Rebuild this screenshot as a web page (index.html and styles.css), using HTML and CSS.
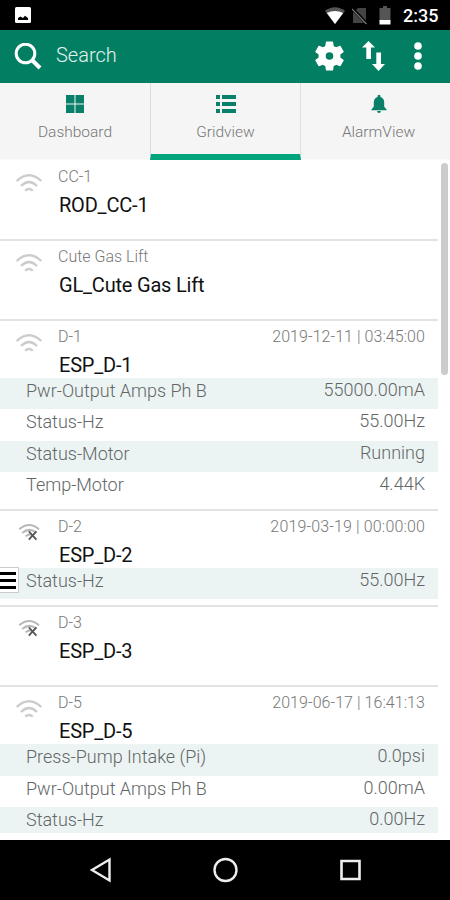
FILE: index.html
```html
<!DOCTYPE html>
<html lang="en">
<head>
<meta charset="utf-8">
<meta name="viewport" content="width=device-width, initial-scale=1">
<title>Gridview</title>
<link rel="stylesheet" href="styles.css">
</head>
<body>
<svg class="symbols" aria-hidden="true">
  <symbol id="wifi" viewBox="0 0 28 22">
    <g fill="none" stroke="#ccc" stroke-width="2.4">
      <path d="M1.700 9Q14-2.600 26.300 9"/><path d="M6 14Q14 6 22 14"/><path d="M10.200 18.600Q14 15.200 17.800 18.600"/>
    </g>
  </symbol>
  <symbol id="wifi-off" viewBox="0 0 28 22">
    <g fill="none" stroke="#b8b8b8" stroke-width="2">
      <path d="M4.300 7.200Q14-1.200 24 7.200"/><path d="M7.200 11Q14 5 21 10.500"/><path d="M10.500 14.400Q13 12 16 12.500"/>
    </g>
    <path d="M13.800 9.400l7.600 8.200M21.400 9.400l-7.600 8.200" stroke="#555" stroke-width="1.8"/>
  </symbol>
</svg>
<div class="screen">
  <header class="status">
    <svg class="picture" width="16" height="16" viewBox="0 0 16 16"><rect width="16" height="16" rx="1.500" fill="#fff"/><path d="M3 13V11l2.500-1.500L8 11l2-2.300 3 2.300v2z"/></svg>
    <div class="status-right">
      <svg width="20" height="17" viewBox="0 0 20 17"><path d="M0 4Q10-3.500 20 4L10 17z" fill="#555"/><path d="M1.800 6Q10 2 18.200 6L10 17z" fill="#fff"/></svg>
      <svg class="sim" width="16" height="18" viewBox="0 0 16 18"><path d="M1 6l5-5h8v15H1z" fill="#444"/><path d="M0 1l15 16" stroke="#000" stroke-width="3"/><path d="M0 2l14.500 15" stroke="#777" stroke-width="1.200"/></svg>
      <svg class="battery" width="12" height="19" viewBox="0 0 12 19"><path d="M.5 2H4V0h4v2h3.500v13H.5z" fill="#555"/><path d="M.5 14h11v4.500H.5z" fill="#fff"/></svg>
      <span class="clock">2:35</span>
    </div>
  </header>
  <div class="appbar">
    <svg width="28" height="28" viewBox="0 0 28 28" fill="none" stroke="#fff"><circle cx="11.500" cy="10.500" r="9.300" stroke-width="3"/><path d="M18 17l8 8" stroke-width="4"/></svg>
    <span class="search">Search</span>
    <svg class="gear" width="35" height="36" viewBox="0 0 24 24"><path fill="#fff" d="M19.430 12.980c.04-.32.07-.64.07-.98s-.03-.66-.07-.98l2.110-1.650c.19-.15.24-.42.12-.64l-2-3.460c-.12-.22-.39-.3-.61-.22l-2.490 1c-.52-.4-1.080-.73-1.690-.98l-.38-2.650C14.460 2.180 14.250 2 14 2h-4c-.25 0-.46.18-.49.42l-.38 2.650c-.61.25-1.170.59-1.690.98l-2.490-1c-.23-.09-.49 0-.61.22l-2 3.460c-.13.22-.07.49.12.64l2.110 1.650c-.04.32-.07.65-.07.98s.03.66.07.98l-2.110 1.650c-.19.15-.24.42-.12.64l2 3.460c.12.22.39.3.61.22l2.490-1c.52.4 1.080.73 1.690.98l.38 2.650c.03.24.24.42.49.42h4c.25 0 .46-.18.49-.42l.38-2.650c.61-.25 1.170-.59 1.690-.98l2.490 1c.23.09.49 0 .61-.22l2-3.460c.12-.22.07-.49-.12-.64zM12 14.600a2.600 2.600 0 1 1 0-5.200 2.600 2.600 0 0 1 0 5.200z"/></svg>
    <svg class="sort" width="24" height="30" viewBox="0 0 24 30" fill="#fff"><path d="M6.500 0l6.500 6.500H9V18H4.300V6.500H0zM14.300 11.500H19V23h4l-6.500 7L10 23h4.300z"/></svg>
    <svg class="more" width="8" height="28" viewBox="0 0 8 28" fill="#fff"><circle cx="4" cy="4" r="3.800"/><circle cx="4" cy="14" r="3.800"/><circle cx="4" cy="24" r="3.800"/></svg>
  </div>
  <nav class="tabs">
    <div class="tab">
      <svg width="18" height="18" viewBox="0 0 18 18" fill="#08806a"><path d="M0 0h8.500v8.500H0zM9.500 0H18v8.500H9.500zM0 9.500h8.500V18H0zM9.500 9.500H18V18H9.500z"/></svg>
      <span>Dashboard</span>
    </div>
    <div class="tab active">
      <svg width="20" height="18" viewBox="0 0 20 18" fill="#08806a"><path d="M0 0h4v4H0zM0 7h4v4H0zM0 14h4v4H0zM6 0h14v4H6zM6 7h14v4H6zM6 14h14v4H6z"/></svg>
      <span>Gridview</span>
    </div>
    <div class="tab">
      <svg width="16" height="19" viewBox="0 0 16 19" fill="#08806a"><path d="M6.500 2V1.200a1.500 1.500 0 0 1 3 0V2Q13.500 3.200 13.500 8v4.500l2.500 2.700v1H0v-1l2.500-2.700V8Q2.500 3.200 6.500 2zM6 17h4a2 2 0 0 1-4 0z"/></svg>
      <span>AlarmView</span>
    </div>
  </nav>
  <main class="content">
    <div class="list">
      <section class="item">
        <div class="head"><svg class="signal"><use href="#wifi"/></svg><div class="names"><div class="line"><span>CC-1</span></div><div class="name">ROD_CC-1</div></div></div>
      </section>
      <section class="item">
        <div class="head"><svg class="signal"><use href="#wifi"/></svg><div class="names"><div class="line"><span>Cute Gas Lift</span></div><div class="name">GL_Cute Gas Lift</div></div></div>
      </section>
      <section class="item">
        <div class="head"><svg class="signal"><use href="#wifi"/></svg><div class="names"><div class="line"><span>D-1</span><time>2019-12-11 | 03:45:00</time></div><div class="name">ESP_D-1</div></div></div>
        <div class="row"><span>Pwr-Output Amps Ph B</span><span class="value">55000.00mA</span></div>
        <div class="row"><span>Status-Hz</span><span class="value">55.00Hz</span></div>
        <div class="row"><span>Status-Motor</span><span class="value">Running</span></div>
        <div class="row"><span>Temp-Motor</span><span class="value">4.44K</span></div>
      </section>
      <section class="item">
        <div class="head"><svg class="signal"><use href="#wifi-off"/></svg><div class="names"><div class="line"><span>D-2</span><time class="wide">2019-03-19 | 00:00:00</time></div><div class="name">ESP_D-2</div></div></div>
        <div class="row"><span>Status-Hz</span><span class="value">55.00Hz</span></div>
        <div class="handle"><i></i><i></i><i></i></div>
      </section>
      <section class="item">
        <div class="head"><svg class="signal"><use href="#wifi-off"/></svg><div class="names"><div class="line"><span>D-3</span></div><div class="name">ESP_D-3</div></div></div>
      </section>
      <section class="item last">
        <div class="head"><svg class="signal"><use href="#wifi"/></svg><div class="names"><div class="line"><span>D-5</span><time>2019-06-17 | 16:41:13</time></div><div class="name">ESP_D-5</div></div></div>
        <div class="row"><span>Press-Pump Intake (Pi)</span><span class="value">0.0psi</span></div>
        <div class="row"><span>Pwr-Output Amps Ph B</span><span class="value">0.00mA</span></div>
        <div class="row"><span>Status-Hz</span><span class="value">0.00Hz</span></div>
      </section>
    </div>
    <div class="scroll"><div class="thumb"></div></div>
  </main>
  <footer class="navbar">
    <svg width="22" height="26" viewBox="0 0 22 26" fill="none" stroke="#eee" stroke-width="2.400"><path d="M20.500 2.500v21L3 13z"/></svg>
    <svg width="26" height="26" viewBox="0 0 26 26" fill="none" stroke="#eee" stroke-width="2.400"><circle cx="13.500" cy="13" r="11"/></svg>
    <svg width="22" height="22" viewBox="0 0 22 22" fill="none" stroke="#eee" stroke-width="2.600"><path d="M2.500 2h18v18h-18z"/></svg>
  </footer>
</div>
</body>
</html>
```
FILE: styles.css
```css
* { box-sizing: border-box; }
body { margin: 0; font-family: Roboto, "Liberation Sans", sans-serif; background: #fff; }
svg { display: block; flex: none; }
.symbols { position: absolute; width: 0; height: 0; }
.screen { width: 450px; height: 900px; display: flex; flex-direction: column; overflow: hidden; }

.status { height: 30px; flex: none; background: #000; display: flex; justify-content: space-between; padding: 7px 11px 0 15px; }
.status-right { display: flex; align-items: flex-start; color: #fff; }
.sim { margin-left: 7px; }
.battery { margin-left: 11px; margin-top: -1px; }
.clock { margin-left: 12px; font-size: 18px; line-height: 18px; font-weight: 500; width: 36px; white-space: nowrap; }

.appbar { height: 53px; flex: none; background: #027f62; display: flex; align-items: center; padding: 0 28px 2px 14px; }
.search { color: #e2f3ee; font-size: 20px; font-weight: 300; margin-left: 14px; flex: 1; line-height: 24px; padding-bottom: 1px; }
.sort { margin-left: 15px; }
.more { margin-left: 28px; }
.appbar svg:first-child { margin-top: 3px; }

.tabs { height: 77px; flex: none; display: grid; grid-template-columns: 150px 151px 149px; background: #f5f5f5; }
.tab { display: flex; flex-direction: column; align-items: center; padding-top: 12px; color: #777; font-size: 15.5px; font-weight: 300; line-height: 20px; border-bottom: 1px solid #fafafa; }
.tab svg { height: 18px; margin-bottom: 9px; }
.tab:last-child { padding-left: 6px; }
.active { border-bottom: 6px solid #02a47e; border-left: 1px solid #ddd; border-right: 1px solid #ddd; }

.content { flex: 1; min-height: 0; display: flex; overflow: hidden; }
.list { width: 438px; }
.item { position: relative; min-height: 80px; padding-bottom: 6px; border-bottom: 2px solid #e3e3e3; }
.item:first-child { min-height: 81px; padding-top: 1px; }
.head { height: 57px; display: flex; padding: 6px 13px 0 15px; }
.signal { width: 28px; height: 22px; margin-top: 5px; }
.names { flex: 1; margin-left: 15px; }
.line { display: flex; justify-content: space-between; font-size: 16px; font-weight: 300; line-height: 20px; color: #777; }
.line time { letter-spacing: 0.06px; }
.line .wide { letter-spacing: 0.15px; }
.name { font-size: 20px; line-height: 28px; margin: 4px 0 0 1px; color: #111; letter-spacing: -0.2px; }
.row { height: 31.3px; display: flex; justify-content: space-between; padding: 0 13px 0 26px; font-size: 18px; font-weight: 300; line-height: 25px; color: #626666; }
.value { line-height: 23px; }
.row:nth-child(even) { background: #ecf4f3; }
.last { border: 0; }
.last .row:last-child { height: 26px; }

.handle { position: absolute; left: 0; top: 56px; width: 19px; height: 26px; background: #fff; border: 1px solid #ccc; border-left: 0; padding: 4px 2px 0 0; display: flex; flex-direction: column; gap: 4px; }
.handle i { height: 3px; background: #000; }

.scroll { width: 12px; padding: 3px 0 0 3px; }
.thumb { width: 7px; height: 212px; border-radius: 4px; background: #ccc; }

.navbar { height: 60px; flex: none; background: #000; display: flex; align-items: center; justify-content: space-between; padding: 0 89px; }
```
